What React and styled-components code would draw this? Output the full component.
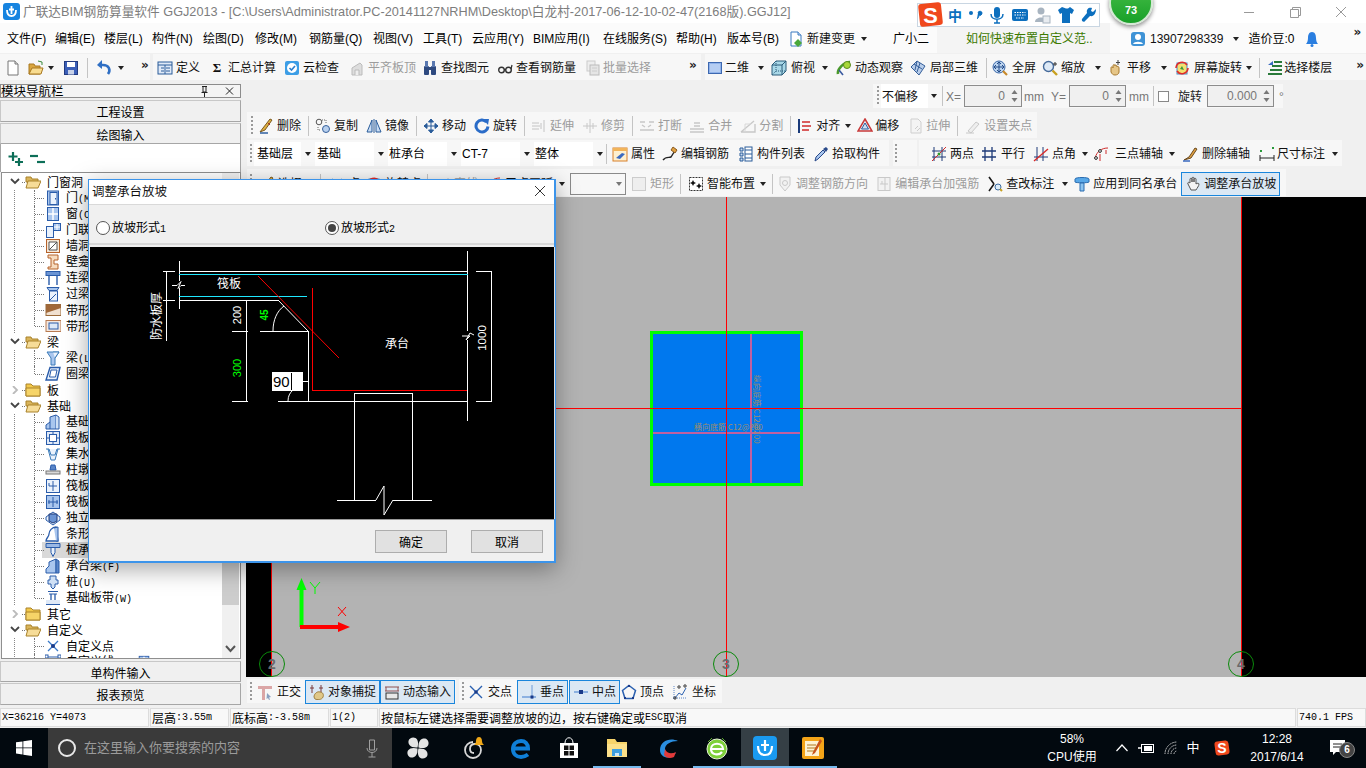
import React from "react";
import styled, { createGlobalStyle } from "styled-components";

const cjk = `"Noto Sans CJK SC", sans-serif`;
const ui = `"Liberation Sans", "Noto Sans CJK SC", sans-serif`;

const Global = createGlobalStyle`
  html, body { margin: 0; padding: 0; background: #f0f0f0; overflow: hidden; }
  * { box-sizing: border-box; }
`;

/* ---------- icons ---------- */
const B = "#2a5caa", LB = "#a9c6ee", O = "#b5622a";
const ICONS = {
  newf: <><path d="M3 1h7l3 3v11H3z" fill="#fff" stroke="#777"/><path d="M10 1v3h3" fill="#ddd" stroke="#777"/></>,
  open: <><path d="M1 4h5l1 2h5v8H1z" fill="#d9a63e" stroke="#a87820"/><path d="M4 8h11l-2 6H1z" fill="#f8dc90" stroke="#a87820"/><path d="M10 1l4 1v3" fill="none" stroke="#3a8a3a"/></>,
  save: <><rect x="1.5" y="1.5" width="13" height="13" fill="#3b5fb8" stroke="#223a80"/><rect x="4" y="2" width="8" height="5" fill="#fff"/><rect x="5" y="10" width="6" height="4.5" fill="#c8d2e8"/></>,
  undo: <><path d="M12 14c3-4 1-9-5-9H5" stroke="#2f6fc4" strokeWidth="2.6" fill="none"/><path d="M6 0v9L1 5z" fill="#2f6fc4"/></>,
  def: <><rect x="1" y="2" width="14" height="12" fill="#dfe9f7" stroke="#2a5c9a"/><path d="M1 5h14M4 8h3M4 11h3M9 8h4M9 11h4M8 5v9" stroke="#2a5c9a" fill="none"/></>,
  cloud: <><rect x="1" y="1" width="14" height="14" rx="2" fill="#3d9ee6"/><circle cx="8" cy="8" r="5" fill="#fff"/><path d="M5.5 8l2 2 3.5-4" stroke="#2a7fd0" strokeWidth="1.6" fill="none"/></>,
  flat: <><path d="M3 15V8l8-5 2 2v10z" fill="#ddd" stroke="#bbb"/><path d="M6 15v-5h4v5" fill="#eee" stroke="#bbb"/></>,
  find: <><rect x="2" y="6" width="5" height="9" rx="1" fill="#2f4a80"/><rect x="9" y="6" width="5" height="9" rx="1" fill="#2f4a80"/><rect x="3" y="1" width="3" height="6" fill="#5a78b0"/><rect x="10" y="1" width="3" height="6" fill="#5a78b0"/><rect x="7" y="7" width="2" height="3" fill="#2f4a80"/></>,
  glass: <><circle cx="4.5" cy="10" r="2.8" fill="none" stroke="#333" strokeWidth="1.4"/><circle cx="11.5" cy="10" r="2.8" fill="none" stroke="#333" strokeWidth="1.4"/><path d="M7 9.5h2M14 9l1-4" stroke="#333" strokeWidth="1.2"/></>,
  batch: <><rect x="3" y="1" width="8" height="10" fill="#eee" stroke="#ccc"/><rect x="6" y="5" width="9" height="10" fill="#e5e5e5" stroke="#bbb"/><path d="M8 8h5M8 11h5" stroke="#ccc"/></>,
  plane: <><rect x="1.5" y="2.5" width="13" height="11" fill="#8fb2ea" stroke="#3d68b0"/><rect x="3" y="4" width="10" height="8" fill="#b5cdf2"/></>,
  cube: <><path d="M1 5l4-4h10v10l-4 4H1z" fill="#a9d8e8" stroke="#2a5c7a"/><path d="M1 5h10v10M11 5l4-4" fill="none" stroke="#2a5c7a"/><path d="M5 1v10l-4 4M5 11h10" fill="none" stroke="#2a5c7a" strokeDasharray="1 1"/></>,
  orbit: <><path d="M2 14c-1-5 6-12 12-12" stroke="#4a9a2a" strokeWidth="2.6" fill="none"/><circle cx="11" cy="5" r="3.5" fill="#a8d838" stroke="#5a8a20"/><path d="M3 10l4 5" stroke="#3a5aa0" strokeWidth="1.6"/></>,
  part3d: <><path d="M1 7l6-6 8 5-6 9z" fill="#b8cdea" stroke="#355f9a"/><path d="M4 4l8 5M7 1l-2 9M10 3l-3 9" stroke="#355f9a" fill="none"/></>,
  full: <><circle cx="7" cy="7" r="6" fill="#bcd4ef" stroke="#3b68a8"/><path d="M7 2v10M2 7h10M7 2l-2 2M7 2l2 2M7 12l-2-2M7 12l2-2M2 7l2-2M2 7l2 2M12 7l-2-2M12 7l-2 2" stroke="#234b88" fill="none"/><path d="M11 11l4 4" stroke="#c88a2a" strokeWidth="2.2"/></>,
  zoom: <><circle cx="6.5" cy="6.5" r="5" fill="#dde9f6" stroke="#456a9a" strokeWidth="1.4"/><path d="M10.5 10.5l4.5 4.5" stroke="#c8a020" strokeWidth="2.4"/><path d="M13 2v4M11 4h4" stroke="#333"/></>,
  pan: <><path d="M4 8c0-2 2-1 2 0V6c0-2 2-2 2 0 0-2 2-1 2 1 0-1 2-1 2 1v4c0 2-2 3-4 3s-3-1-4-3z" fill="#e6c688" stroke="#a87a30"/><path d="M11 0v5M9 2.5h4" stroke="#444"/></>,
  rot: <><rect x="3" y="3" width="10" height="11" fill="#f4e070" stroke="#4a8ac8"/><path d="M2 8a6 6 0 0 1 11-3M14 8a6 6 0 0 1-11 3" stroke="#e02a2a" strokeWidth="1.6" fill="none"/><path d="M6 9l2-3 2 4z" fill="#3a9a3a"/></>,
  floor: <><path d="M7 2h8M5 6h10M3 10h12M1 14h14" stroke="#2a7a3a" strokeWidth="2" fill="none"/><path d="M6 1L1 5h5z" fill="#3a6ac0"/></>,
  change: <><path d="M3 1h7l3 3v11H3z" fill="#fff" stroke="#3a7ac0"/><path d="M10 1v3h3" fill="#cfe0f5" stroke="#3a7ac0"/><path d="M10 8l4 4-4 4-4-4z" fill="#4aa83a"/></>,
  user: <><rect x="1" y="1" width="14" height="14" rx="3" fill="#3f93d6"/><circle cx="8" cy="6" r="3" fill="#fff"/><path d="M3 13c1-3 9-3 10 0z" fill="#fff"/></>,
  bell: <><path d="M8 1c-3 0-4 3-4 6 0 3-1 5-2 6h12c-1-1-2-3-2-6 0-3-1-6-4-6z" fill="#2a7ee0"/><circle cx="8" cy="14.5" r="1.5" fill="#2a7ee0"/></>,
  del: <><path d="M2 14l5-2 7-10-2-1-7 9z" fill="#e0b040" stroke="#7a5a20"/><path d="M2 15h8" stroke="#3060a0" strokeWidth="1.5"/><path d="M10 5l2 2" stroke="#b02a2a"/></>,
  copy: <><circle cx="4" cy="4" r="2.8" fill="none" stroke="#555"/><circle cx="11" cy="11" r="3.5" fill="#b8d0ee" stroke="#355f9a"/><path d="M7 2h4v3M3 9v3h3" fill="none" stroke="#666" strokeDasharray="1 1"/></>,
  mirror: <><path d="M1 14L6 2v12zM15 14L10 2v12z" fill="#c8dcf4" stroke="#2a5c9a"/><path d="M8 1v14" stroke="#2a5c9a"/></>,
  move: <><path d="M8 1v14M1 8h14M8 1L5.5 4h5zM8 15l-2.5-3h5zM1 8l3-2.5v5zM15 8l-3-2.5v5z" fill="#2a5c9a" stroke="#2a5c9a"/></>,
  rotate: <><path d="M12.5 4A6 6 0 1 0 14 8.5" stroke="#2a6cc8" strokeWidth="3" fill="none"/><path d="M9 1l6 0-1 6z" fill="#2a6cc8"/></>,
  ext: <><path d="M1 8h8M13 2v12M10 5v6M1 5h7M1 11h7" stroke="#c4c4c4" fill="none"/></>,
  trim: <><path d="M1 8h14M8 1v14M5 5v6M11 5v6" stroke="#c8c8c8" fill="none"/></>,
  brk: <><path d="M1 4h5M10 4h5M1 12h14M3 7l3 2M12 7l-3 2" stroke="#c8c8c8" strokeWidth="1.4" fill="none"/></>,
  merge: <><path d="M1 11h14M1 14h14M5 5h6M5 8h6" stroke="#c8c8c8" strokeWidth="1.4" fill="none"/></>,
  split: <><path d="M1 14l13-11M1 14h14V6" stroke="#c8c8c8" strokeWidth="1.4" fill="none"/><path d="M5 14V6h6" stroke="#d8d8d8" fill="none"/></>,
  align: <><path d="M2 1v14" stroke="#1a3a7a" strokeWidth="2"/><path d="M5 4h8M5 8h9M5 12h7" stroke="#d02a2a" strokeWidth="1.5"/></>,
  offset: <><path d="M8 1l7 12H1z" fill="#e8eef6" stroke="#c83a3a" strokeWidth="1.5"/><path d="M8 5l3.5 6h-7z" fill="#cfe0f5" stroke="#2a5c9a"/></>,
  stretch: <><path d="M3 1h7l3 3v11H3z" fill="#f4f4f4" stroke="#cfcfcf"/><path d="M7 11l3-3M9 13l3-3" stroke="#ccc"/></>,
  grip: <><path d="M1 15h8M3 13l8-9 3 2-8 9z" fill="#eee" stroke="#c8c8c8"/></>,
  attr: <><rect x="1" y="2" width="14" height="13" fill="#fdf0d0" stroke="#d8802a"/><path d="M1 2h14v3H1z" fill="#f2b45a"/><path d="M4 12l6-5 3 1-5 5z" fill="#3a6ac0"/></>,
  editbar: <><path d="M1 14c3-4 6-2 8-3l5-8" stroke="#222" strokeWidth="1.4" fill="none"/><path d="M11 1l4 3-2 3-4-3z" fill="#e0a040" stroke="#8a5a20"/></>,
  list: <><path d="M2 2h3v3H2zM2 7h3v3H2zM2 12h3v3H2z" fill="#c8dcf4" stroke="#2a5c9a"/><rect x="7" y="1" width="7" height="14" fill="#fff" stroke="#2a5c9a"/><path d="M7 4h7M7 8h7M7 12h7" stroke="#2a5c9a"/></>,
  pick: <><path d="M2 15l1-4 7-7 2 2-7 7z" fill="#a9c6ee" stroke="#2a4a8a"/><path d="M10 3l3-2 2 2-2 3z" fill="#2a4a8a"/></>,
  twop: <><path d="M3 1v14M11 1v14M1 5h14M1 11h14" stroke="#1e3a78" fill="none"/><path d="M1 15L15 1" stroke="#d02a2a"/><circle cx="8" cy="8" r="1.5" fill="#2a9a2a"/></>,
  para: <><path d="M4 1v14M11 1v14M1 5h14M1 11h14" stroke="#1e3a78" strokeWidth="1.3" fill="none"/></>,
  angle: <><path d="M4 1v14M10 1v14M1 11h14" stroke="#1e3a78" fill="none"/><path d="M1 15L15 3" stroke="#d82a2a" strokeWidth="1.4"/></>,
  three: <><path d="M1 12C3 5 8 2 14 2" stroke="#d02a2a" fill="none"/><circle cx="2" cy="12" r="1.4" fill="#fff" stroke="#222"/><circle cx="6" cy="5" r="1.4" fill="#fff" stroke="#222"/><path d="M6 8v7M12 4v4" stroke="#d02a2a"/></>,
  delaxis: <><path d="M2 14l5-3 6-9 2 1-6 9z" fill="#e0a040" stroke="#6a4a20"/><path d="M1 15h7" stroke="#3a6ac0" strokeWidth="1.5"/></>,
  dim: <><path d="M1 9v6M15 9v6M1 12h14" stroke="#222" fill="none"/><rect x="1" y="4" width="2" height="2" fill="#2a9a3a"/><rect x="13" y="1" width="2" height="2" fill="#2a9a3a"/></>,
  rectc: <><rect x="1.5" y="1.5" width="13" height="13" fill="#eee" stroke="#ccc"/></>,
  smart: <><rect x="1.5" y="1.5" width="13" height="13" fill="#fff" stroke="#333" strokeDasharray="2 1"/><path d="M5 4l1 2 2 1-2 1-1 2-1-2-2-1 2-1zM11 7l1 2 2 1-2 1-1 2-1-2-2-1 2-1z" fill="#111"/></>,
  bardir: <><path d="M3 1h10v8l-5 6-5-6z" fill="#f2f2f2" stroke="#c9c9c9"/><circle cx="8" cy="7" r="2.5" fill="none" stroke="#c9c9c9"/></>,
  strong: <><rect x="2" y="1.5" width="12" height="13" fill="#f2f2f2" stroke="#c9c9c9"/><path d="M9 2v12M4 8h8M6 5v3" stroke="#c9c9c9"/></>,
  note: <><path d="M2 1l5 7M2 15l5-7" stroke="#1a1a1a" strokeWidth="1.6"/><circle cx="11" cy="11" r="3" fill="#dcecf8" stroke="#3a6aa0"/><path d="M13 13l2 2" stroke="#c8a020" strokeWidth="2"/></>,
  apply: <><path d="M1 3c0-2 14-2 14 0v3c0 1-14 1-14 0z" fill="#58a8e8" stroke="#2a6cb0"/><path d="M6 7h4v8H6z" fill="#8cc4f0" stroke="#2a6cb0"/></>,
  hand: <><path d="M3 8c-1-2 1-2 2-1V3c0-1 2-1 2 0v3-4c0-1 2-1 2 0v4-3c0-1 2-1 2 0v5c1-1 3-1 3 0 0 2-2 4-3 6H6z" fill="#f4f4f4" stroke="#555"/></>,
  ortho: <><path d="M1 2h14v3H8v11H5V5H1z" fill="#dba6a6"/><path d="M10 9l4 4-2 .5 1 2-1 .5-1-2-1.5 1z" fill="#8aa0c0"/></>,
  snap: <><path d="M3 1v8M12 1v8M1 4h4M10 4h4" stroke="#7a3a3a"/><path d="M5 13c0-3 3-6 6-5 3 0 4 3 3 5-1 3-6 3-8 2z" fill="#e0c888" stroke="#a08040"/></>,
  dynin: <><path d="M1 3h14M1 7h14M2 3v4M14 3v4" stroke="#905050"/><rect x="2" y="9" width="12" height="6" fill="#e8e8e8" stroke="#333"/></>,
  cross: <><path d="M2 2l12 12M14 2L2 14" stroke="#2a60b0" strokeWidth="1.4"/><circle cx="8" cy="8" r="1.8" fill="#1a3a88"/></>,
  perp: <><path d="M1 13h14" stroke="#6a9ad8" strokeWidth="1.4"/><path d="M11 1v14" stroke="#6a9ad8"/><rect x="9.5" y="11.5" width="3" height="3" fill="#1a3a88"/></>,
  mid: <><path d="M1 8h14" stroke="#6a9ad8" strokeWidth="1.4"/><rect x="6" y="6" width="4" height="4" fill="#1a3a88"/></>,
  vert: <><path d="M8 1.5l6.5 5-2.5 8H4l-2.5-8z" fill="none" stroke="#2a60b0" strokeWidth="1.5"/><rect x="7" y="1" width="2" height="2" fill="#1a3a88"/><rect x="3" y="13" width="2" height="2" fill="#1a3a88"/><rect x="11" y="13" width="2" height="2" fill="#1a3a88"/></>,
  coord: <><path d="M3 14l4-5 3 2 4-7" stroke="#2a60b0" fill="none"/><path d="M2 2v13M1 14h14" stroke="#5a86c8" strokeDasharray="1 1"/><circle cx="7" cy="3" r="1.2" fill="none" stroke="#333"/><circle cx="13" cy="2" r="1.2" fill="none" stroke="#333"/><circle cx="3" cy="14" r="1.2" fill="none" stroke="#333"/></>,
  plus: <><path d="M6 1v9M1.5 5.5h9" stroke="#0d6f58" strokeWidth="2.2"/><path d="M12 7v8M8 11h8" stroke="#0d6f58" strokeWidth="2.2"/></>,
  minus: <><path d="M1 5h8" stroke="#0d6f58" strokeWidth="2.2"/><path d="M8 11h8" stroke="#0d6f58" strokeWidth="2.2"/></>,
  fo: <><path d="M1 3h5l1 2h6v3H1z" fill="#d9b45a" stroke="#a9822a"/><path d="M3 7h13l-3 7H1z" fill="#f6dc98" stroke="#a9822a"/></>,
  fc: <><path d="M1 2h5l2 2h7v10H1z" fill="#f2c84a" stroke="#a9822a"/><path d="M1 6h14v8H1z" fill="#f6d468" stroke="#a9822a"/></>,
  door: <><rect x="2.5" y="1" width="11" height="14" fill={LB} stroke={B}/><rect x="5" y="2.5" width="7" height="12" fill="#eaf2fc" stroke={B}/><rect x="10" y="8" width="1" height="1.5" fill={B}/></>,
  win: <><rect x="2.5" y="1.5" width="11" height="13" fill={LB} stroke={B}/><path d="M8 2v12M3 8h10" stroke="#fff" strokeWidth="1.5"/></>,
  dw: <><rect x="1.5" y="4.5" width="7" height="11" fill="#eaf2fc" stroke={B}/><rect x="8.5" y="1.5" width="7" height="7" fill={LB} stroke={B}/><path d="M12 2v6M9 5h6" stroke="#fff"/></>,
  hole: <><rect x="1.5" y="1.5" width="13" height="13" fill="#f6e8d8" stroke={O}/><path d="M4 4h8v8H4zM4 12l8-8" fill="#fff" stroke="#555"/></>,
  niche: <><path d="M3 1h10v5H9v4h4v5H3v-2h3V4H3z" fill="#f6dcc0" stroke={O}/></>,
  beamc: <><rect x="1" y="1.5" width="14" height="4" fill="#6a94d4" stroke={B}/><path d="M4 5v10M12 5v10" stroke={B} strokeWidth="1.4"/></>,
  lint: <><path d="M2 1.5h12l-2 3H4z" fill={LB} stroke={B}/><rect x="4.5" y="5" width="8" height="10" fill="#eaf2fc" stroke={B}/><path d="M5 14l6-6" stroke={B}/></>,
  strip1: <><rect x="1" y="2.5" width="15" height="11" fill="#f0e0d0" stroke="#9a6a3a"/><path d="M1 11l15-5v-3H1z" fill="#a0683a"/></>,
  strip2: <><rect x="1" y="2.5" width="15" height="11" fill="#f4e8e0" stroke="#b87a50"/><rect x="4" y="5" width="9" height="6" fill="#dce8f8" stroke={B}/></>,
  beam: <><path d="M2 2h12l-4 6v7H6V8z" fill={LB} stroke="#3a7ab8"/><path d="M8 2l6 0-4 6" fill="#eaf2fc" stroke="#3a7ab8"/></>,
  ring: <><path d="M5 1.5h10L12 14H1z" fill="#eaf2fc" stroke={B} strokeWidth="1.4"/><path d="M6 4h6l-1.5 7H4.5z" fill="#fff" stroke={B}/></>,
  fbase: <><path d="M1 15v-4l4-3V3l6-2v14z" fill={LB} stroke={B}/><path d="M5 8v7M11 1l3 2v12h-3" fill="#cfe0f5" stroke={B}/></>,
  raft: <><rect x="1.5" y="1.5" width="13" height="13" fill="#dfe9f7" stroke={B}/><rect x="4.5" y="4.5" width="7" height="7" fill="#fff" stroke={B}/><path d="M1 8h3M12 8h3M8 1v3M8 12v3" stroke={B}/></>,
  pit: <><path d="M1 3h3l2 6h4l2-6h3M3 3l3 11h4l3-11" fill="#eaf2fc" stroke="#3a7ab8"/></>,
  cap: <><path d="M6 3h4l1 5H5z" fill="#5a86c8" stroke={B}/><rect x="1" y="9" width="14" height="3" fill="#d8d8d8" stroke="#777"/></>,
  rmain: <><rect x="1.5" y="1.5" width="13" height="13" fill="#eaf2fc" stroke={B}/><path d="M8 3v10M4 8h8M4 5v3" stroke={B}/></>,
  rneg: <><rect x="1.5" y="1.5" width="13" height="13" fill={LB} stroke={B}/><path d="M8 3v10M3 8h10M4 6v4M12 6v4" stroke={B}/></>,
  iso: <><path d="M1 7l7 -5 7 5v3l-7 5-7-5z" fill="#eaf2fc" stroke={B}/><path d="M4 4h8v7l-4 2-4-2z" fill="#6a94d4" stroke="#1e3a78"/></>,
  ftg: <><path d="M1 15c0-3 3-4 3-7s3-7 7-7l2 14z" fill="#fff" stroke={B} strokeWidth="1.3"/><path d="M9 2l4-1v14h-2" fill={LB} stroke={B}/></>,
  pilecap: <><path d="M1 1.5h14v4H1z" fill="#9ab8e4" stroke={B}/><path d="M6 5.5h4v5l-2 4-2-4z" fill="#eaf2fc" stroke={B}/></>,
  cbeam: <><path d="M1 15v-4l3-3V4l7-3v14z" fill={LB} stroke={B}/><path d="M11 1l3 2v12h-3z" fill="#5a86c8" stroke={B}/></>,
  pile: <><path d="M5 2h6v4h2v4h-3v3l-2 2-2-2v-3H3V6h2z" fill="#cfe0f5" stroke={B}/></>,
  band: <><path d="M3 1.5h10M4 4h8M1 14.5h14" stroke={B}/><path d="M6 4v10M10 4v10" stroke={B} strokeWidth="1.3"/><rect x="1" y="10" width="14" height="4" fill="#dfe9f7"/></>,
  point: <><path d="M3 3l10 10M13 3L3 13" stroke="#3a7ac8" strokeWidth="1.3"/><circle cx="8" cy="8" r="2" fill="#1a3a88"/></>,
  cline: <><path d="M1 3h14" stroke={B}/><rect x="0" y="1" width="3" height="3" fill="#fff" stroke={B}/><rect x="13" y="1" width="3" height="3" fill="#fff" stroke={B}/></>,
};

const IconSvg = styled.svg`
  flex: none;
  width: ${p => p.$s || 16}px;
  height: ${p => p.$s || 16}px;
  display: block;
`;
const Ic = ({ n, s }) => <IconSvg $s={s} viewBox="0 0 16 16">{ICONS[n]}</IconSvg>;

/* ---------- shell ---------- */
const Shell = styled.div`
  position: relative;
  width: 1366px;
  height: 768px;
  overflow: hidden;
  background: #f0f0f0;
  display: flex;
  flex-direction: column;
  font: 12px/16px ${ui};
  color: #000;
`;
const Title = styled.div`
  height: 23px;
  flex: none;
  background: #fff;
  display: flex;
  align-items: center;
  padding-left: 3px;
  gap: 3px;
`;
const AppLogo = styled.svg`
  width: 17px;
  height: 17px;
  flex: none;
`;
const TitleText = styled.span`
  font-size: 12.7px;
  color: #7d7d7d;
  white-space: nowrap;
  flex: 1;
`;
const WinBtns = styled.div`
  display: flex;
  padding-right: 2px;
`;
const WinBtn = styled.svg`
  width: 46px;
  height: 20px;
`;
const Menu = styled.div`
  height: 30px;
  flex: none;
  background: #fbfbfb;
  display: flex;
  align-items: center;
  padding: 2px 0 0 7px;
  white-space: nowrap;
`;
const MenuItem = styled.span`
  flex: none;
  width: ${p => p.$w}px;
  margin-left: ${p => p.$ml || 0}px;
`;
const Caret = styled.i`
  flex: none;
  width: 0;
  height: 0;
  margin-left: ${p => p.$ml ?? 6}px;
  border: 3px solid transparent;
  border-top: 4px solid ${p => p.$c || "#222"};
  border-bottom: 0;
`;
const Hint = styled.div`
  flex: none;
  width: 173px;
  height: 30px;
  margin: -2px 0 0 8px;
  padding: 2px 0 0 29px;
  background: #f4f4f4;
  color: #3d7a00;
  display: flex;
  align-items: center;
`;
const Chev = styled.span`
  font: bold 12px/12px "DejaVu Sans", sans-serif;
  letter-spacing: -1px;
  color: #222;
  margin-left: ${p => p.$ml || 0}px;
  margin-right: ${p => p.$mr || 0}px;
  align-self: flex-start;
  margin-top: ${p => p.$mt ?? 4}px;
`;
const ChevEnd = styled(Chev)`
  margin-left: auto;
  margin-right: 3px;
`;
const TopBar = styled.div`
  height: 28px;
  flex: none;
  display: flex;
  align-items: center;
`;
const Strip = styled.div`
  height: ${p => p.$h || 26}px;
  flex: none;
  width: ${p => (p.$w ? p.$w + "px" : "auto")};
  margin-left: ${p => p.$ml || 0}px;
  padding: 2px 0 0 ${p => p.$pl ?? 2}px;
  background: #f7f7f7;
  display: flex;
  align-items: center;
  gap: ${p => p.$gap ?? 7}px;
  white-space: nowrap;
`;
const ToolBox = styled.div`
  display: flex;
  align-items: center;
  flex: none;
  gap: ${p => p.$gap ?? 3}px;
  margin-left: ${p => p.$ml || 0}px;
  height: ${p => (p.$on ? "24px" : "auto")};
  padding: ${p => (p.$on ? "0 4px" : "0")};
  color: ${p => (p.$off ? "#9c9c9c" : "#111")};
  background: ${p => (p.$on ? "#dbe8f4" : "transparent")};
  outline: ${p => (p.$on ? "1.5px solid #1a86dc" : "none")};
  outline-offset: -1.5px;
`;
const T = ({ i, off, on, ml, gap, caret, cm, children }) => (
  <ToolBox $off={off} $on={on} $ml={ml} $gap={gap}>
    {i && <Ic n={i} />}
    {children && <span>{children}</span>}
    {caret && <Caret $ml={cm} />}
  </ToolBox>
);
const Sep = styled.span`
  flex: none;
  width: 1px;
  height: 20px;
  background: #c4c4c4;
  margin-left: ${p => p.$ml || 0}px;
`;
const Grip = styled.span`
  flex: none;
  width: 2px;
  height: 20px;
  margin-left: ${p => p.$ml || 0}px;
  background: repeating-linear-gradient(#9a9a9a 0 2px, transparent 2px 4px);
`;
const SigmaText = styled.b`
  font: bold 13px/16px "Liberation Serif", serif;
  width: 16px;
  text-align: center;
`;
const Combo = styled.div`
  flex: none;
  display: flex;
  align-items: center;
  height: ${p => p.$h || 24}px;
  width: ${p => p.$w}px;
  margin-left: ${p => p.$ml || 0}px;
  background: #fff;
  padding-left: ${p => p.$pl ?? 1}px;
`;
const BoxCombo = styled.div`
  flex: none;
  width: 56px;
  height: 22px;
  margin-left: 5px;
  border: 1px solid #8a8a8a;
  background: #f7f7f7;
  display: flex;
  align-items: center;
  justify-content: flex-end;
  padding-right: 3px;
`;
const ComboArrow = styled.span`
  flex: none;
  display: flex;
  align-items: center;
  justify-content: center;
  width: 13px;
  height: 24px;
  background: #f7f7f7;
`;

/* ---------- left panel ---------- */
const Body = styled.div`
  flex: 1;
  min-height: 0;
  display: flex;
`;
const Left = styled.aside`
  width: 246px;
  flex: none;
  padding-top: 3px;
  display: flex;
  flex-direction: column;
`;
const PanelHead = styled.div`
  width: 241px;
  height: 14px;
  border: 1px solid #8c8c8c;
  display: flex;
  align-items: center;
  font: 12px/12px ${cjk};
  overflow: hidden;
  background: #f4f4f4;
  margin-bottom: 2px;
`;
const PanelHeadText = styled.span`
  flex: 1;
  font-size: 12.5px;
`;
const PanelBtn = styled.div`
  width: 241px;
  height: ${p => p.$h || 22}px;
  flex: none;
  background: #f0f0f0;
  border: 1px solid #a6a6a6;
  border-top-color: #c8c8c8;
  border-left-color: #c8c8c8;
  margin-top: ${p => p.$mt || 0}px;
  padding-top: 2px;
  display: flex;
  align-items: center;
  justify-content: center;
  font: 12px/16px ${cjk};
`;
const TreeHead = styled.div`
  width: 241px;
  height: 28px;
  flex: none;
  background: #fff;
  border-left: 1px solid #a6a6a6;
  border-right: 1px solid #a6a6a6;
  display: flex;
  align-items: center;
  padding: 2px 0 0 6px;
  gap: 6px;
`;
const TreeBox = styled.div`
  width: 240px;
  height: 487px;
  flex: none;
  margin-left: 1px;
  border: 1px solid #8f8f8f;
  background: #fff;
  display: flex;
  overflow: hidden;
`;
const TreeList = styled.div`
  flex: 1;
  min-width: 0;
  padding-top: 1px;
  overflow: hidden;
`;
const Lat = styled.span`
  font: 10px/16px "Liberation Mono", monospace;
`;
const Row = styled.div`
  position: relative;
  height: 16px;
  display: flex;
  align-items: center;
  padding-left: ${p => (p.$lv ? 43 : 23)}px;
  gap: ${p => (p.$lv ? 5 : 6)}px;
  font: 12px/16px ${cjk};
  white-space: nowrap;
  background: ${p => (p.$lv ? `linear-gradient(#888 50%, transparent 50%) 12px 0 / 1px 2px repeat-y` : "none")};
  &::before {
    content: "";
    position: absolute;
    left: ${p => (p.$lv ? 32 : 20)}px;
    top: ${p => (p.$lv ? 0 : 8)}px;
    height: ${p => (p.$lv ? (p.$last ? 8 : 16) : 0)}px;
    border-left: ${p => (p.$lv ? "1px dotted #777" : "none")};
  }
  &::after {
    content: "";
    position: absolute;
    left: ${p => (p.$lv ? 33 : 20)}px;
    top: 8px;
    width: ${p => (p.$lv ? 9 : 3)}px;
    border-top: 1px dotted #777;
  }
`;
const Sel = styled.span`
  display: flex;
  align-items: center;
  gap: 5px;
  margin-left: -3px;
  padding-left: 3px;
  height: 16px;
  width: 60px;
  flex: none;
  background: #d9d9d9;
`;
const Exp = styled.svg`
  position: absolute;
  left: 8px;
  top: 4px;
  width: 10px;
  height: 8px;
`;
const NewTag = styled.span`
  font: bold 11px/16px "Liberation Sans", sans-serif;
  color: #f5c400;
  margin-left: -2px;
`;
const ScrollBar = styled.div`
  width: 17px;
  margin-right: 1px;
  flex: none;
  background: #f0f0f0;
  display: flex;
  flex-direction: column;
`;
const Thumb = styled.div`
  height: 416px;
  margin-top: 16px;
  background: #cdcdcd;
`;
const ScrollArrow = styled.svg`
  display: block;
  width: 17px;
  height: 14px;
  margin-top: auto;
  margin-bottom: 2px;
`;

/* ---------- right column ---------- */
const Right = styled.main`
  flex: 1;
  min-width: 0;
  display: flex;
  flex-direction: column;
`;
const OptionStrip = styled.div`
  height: 24px;
  width: 410px;
  margin: 3px 0 0 627px;
  flex: none;
  background: #f7f7f7;
  display: flex;
  align-items: center;
  padding-left: 4px;
  white-space: nowrap;
  color: #777;
`;
const Field = styled.div`
  flex: none;
  width: ${p => p.$w}px;
  height: 22px;
  margin-left: ${p => p.$ml || 0}px;
  border: 1px solid #8c8c8c;
  background: #f0f0f0;
  display: flex;
  align-items: center;
  justify-content: flex-end;
  font: 12px/16px "Liberation Sans", sans-serif;
  color: #777;
`;
const Spin = styled.svg`
  width: 13px;
  height: 18px;
  margin-left: 3px;
  flex: none;
`;
const Check = styled.span`
  flex: none;
  width: 11px;
  height: 11px;
  border: 1px solid #888;
  background: #fff;
  margin-left: ${p => p.$ml || 0}px;
`;
const Lbl = styled.span`
  margin-left: ${p => p.$ml || 0}px;
  padding-top: 1px;
  color: ${p => p.$c || "#777"};
`;
const ToolRow = styled.div`
  flex: none;
  display: flex;
  margin-top: ${p => p.$mt || 0}px;
`;
const Canvas = styled.svg`
  display: block;
  width: 1120px;
  height: 480px;
  margin-top: ${p => p.$mt || 0}px;
  flex: none;
`;
const SnapBar = styled.div`
  height: 31px;
  flex: none;
  display: flex;
  padding-top: 2px;
  align-items: flex-start;
`;

/* ---------- status ---------- */
const Status = styled.footer`
  height: 20px;
  flex: none;
  display: flex;
  gap: 1px;
  padding-bottom: 1px;
`;
const Cell = styled.div`
  flex: ${p => (p.$w ? "none" : 1)};
  width: ${p => (p.$w ? p.$w + "px" : "auto")};
  background: #f8f8f8;
  border: 1px solid #dcdcdc;
  display: flex;
  align-items: center;
  padding-left: 1px;
  font: 12px/16px ${cjk};
  white-space: nowrap;
  overflow: hidden;
`;

/* ---------- taskbar ---------- */
const Taskbar = styled.nav`
  height: 40px;
  flex: none;
  background: #02090f;
  display: flex;
  align-items: stretch;
  color: #fff;
  font: 12px/16px ${ui};
`;
const Start = styled.div`
  width: 48px;
  flex: none;
  display: flex;
  align-items: center;
  justify-content: center;
`;
const Search = styled.div`
  width: 344px;
  flex: none;
  background: #3a3a3a;
  display: flex;
  align-items: center;
  padding-left: 9px;
  gap: 7px;
  color: #9b9b9b;
  font-size: 13px;
`;
const SearchText = styled.span`
  flex: 1;
`;
const Slot = styled.div`
  width: 48px;
  flex: none;
  margin-left: ${p => p.$ml || 0}px;
  display: flex;
  align-items: center;
  justify-content: center;
  padding-bottom: 1px;
  background: ${p => (p.$on ? "#353f45" : "transparent")};
  box-shadow: ${p => (p.$run ? "inset 0 -2px 0 #76b9ed" : "none")};
`;
const TaskSvg = styled.svg`
  width: ${p => p.$s || 24}px;
  height: ${p => p.$s || 24}px;
  margin-right: ${p => p.$mr || 0}px;
  display: block;
  flex: none;
`;
const Tray = styled.div`
  margin-left: auto;
  display: flex;
  align-items: center;
`;
const TrayStack = styled.div`
  width: ${p => p.$w}px;
  margin-right: ${p => p.$mr || 0}px;
  margin-left: ${p => p.$ml || 0}px;
  flex: none;
  text-align: center;
  line-height: 18px;
`;
const TraySlot = styled.div`
  width: ${p => p.$w}px;
  flex: none;
  display: flex;
  justify-content: center;
  font-size: 13px;
  margin-left: ${p => p.$ml || 0}px;
`;
const Notify = styled.div`
  position: relative;
  width: 56px;
  flex: none;
  display: flex;
  justify-content: center;
`;
const NotifyBadge = styled.span`
  position: absolute;
  left: 29px;
  top: 4px;
  width: 16px;
  height: 16px;
  border-radius: 50%;
  background: #444;
  border: 1px solid #888;
  color: #fff;
  font: bold 10px/14px "Liberation Sans", sans-serif;
  text-align: center;
`;

/* ---------- overlays ---------- */
const Sogou = styled.div`
  position: absolute;
  left: 917px;
  top: 3px;
  width: 183px;
  height: 24px;
  padding-left: 30px;
  background: #fff;
  border: 1px solid #c9d6e2;
  display: flex;
  align-items: center;
  gap: 5px;
`;
const SogouLogo = styled.svg`
  position: absolute;
  left: -1px;
  top: -3px;
  width: 27px;
  height: 27px;
`;
const SogouZh = styled.b`
  font: bold 14px/16px ${cjk};
  color: #0c6fbe;
`;
const Badge = styled.div`
  position: absolute;
  left: 1109px;
  top: -19px;
  width: 44px;
  height: 44px;
  border-radius: 50%;
  background: linear-gradient(#4ac04a, #18a028);
  border: 2px solid #d4e8d4;
  box-shadow: 0 2px 4px rgba(0, 0, 0, .45);
  color: #fff;
  font: bold 11px/14px "Liberation Sans", sans-serif;
  display: flex;
  align-items: flex-end;
  justify-content: center;
  padding-bottom: 6px;
`;
const Dialog = styled.section`
  position: absolute;
  left: 88px;
  top: 179px;
  width: 468px;
  height: 384px;
  background: #f0f0f0;
  border: 1px solid #3c94ea;
  border-bottom-width: 2px;
  border-right-width: 2px;
  box-shadow: 0 6px 22px rgba(0, 0, 0, .35);
  display: flex;
  flex-direction: column;
`;
const DlgTitle = styled.header`
  height: 25px;
  flex: none;
  background: #fff;
  border-bottom: 1px solid #d9d9d9;
  display: flex;
  align-items: center;
  justify-content: space-between;
  padding: 0 8px 2px 3px;
  font: 12.5px/16px ${cjk};
  color: #111;
`;
const DlgClose = styled.svg`
  width: 12px;
  height: 12px;
`;
const DlgOptions = styled.div`
  height: 40px;
  flex: none;
  border-bottom: 2px solid #d8d8d8;
  display: flex;
  align-items: center;
  padding: 8px 0 0 7px;
  font: 12px/16px ${cjk};
`;
const RadioItem = styled.label`
  display: flex;
  align-items: center;
  gap: 2px;
  width: 229px;
`;
const RadioDot = styled.span`
  width: 14px;
  height: 14px;
  flex: none;
  border-radius: 50%;
  border: 1px solid #555;
  background: #fff;
  display: flex;
  align-items: center;
  justify-content: center;
  &::after {
    content: "";
    width: 8px;
    height: 8px;
    border-radius: 50%;
    background: ${p => (p.$on ? "#444" : "transparent")};
  }
`;
const CadSvg = styled.svg`
  display: block;
  flex: none;
  width: 464px;
  height: 272px;
  margin: 2px 0 0 1px;
  background: #000;
  box-shadow: 0 1px 0 #999, 1px 0 0 #ddd;
`;
const DlgFoot = styled.div`
  flex: 1;
  display: flex;
  justify-content: flex-end;
  align-items: flex-start;
  padding: 11px 11px 0 0;
  gap: 24px;
`;
const DlgBtn = styled.button`
  width: 72px;
  height: 23px;
  background: #e1e1e1;
  border: 1px solid #adadad;
  font: 12px/16px ${cjk};
  color: #000;
  padding: 0;
`;

/* ---------- data ---------- */
const menus = [
  ["文件(F)", 48], ["编辑(E)", 49], ["楼层(L)", 48], ["构件(N)", 51], ["绘图(D)", 52], ["修改(M)", 54], ["钢筋量(Q)", 64],
  ["视图(V)", 50], ["工具(T)", 49], ["云应用(Y)", 61], ["BIM应用(I)", 70], ["在线服务(S)", 73], ["帮助(H)", 51], ["版本号(B)", 52],
];

const tree = [
  ["fo", "门窗洞", 0, 1],
  ["door", "门", 1, 0, "(M)"], ["win", "窗", 1, 0, "(C)"], ["dw", "门联窗", 1, 0, "(A)"], ["hole", "墙洞", 1, 0, "(D)"],
  ["niche", "壁龛", 1, 0, "(I)"], ["beamc", "连梁", 1, 0, "(G)"], ["lint", "过梁", 1, 0, "(G)"], ["strip1", "带形窗", 1], ["strip2", "带形洞", 1, "L"],
  ["fo", "梁", 0, 1],
  ["beam", "梁", 1, 0, "(L)"], ["ring", "圈梁", 1, "L", "(E)"],
  ["fc", "板", 0, 2],
  ["fo", "基础", 0, 1],
  ["fbase", "基础梁", 1, 0, "(F)"], ["raft", "筏板基础", 1, 0, "(M)"], ["pit", "集水坑", 1, 0, "(K)"], ["cap", "柱墩", 1, 0, "(Y)"],
  ["rmain", "筏板主筋", 1, 0, "(R)"], ["rneg", "筏板负筋", 1, 0, "(X)"], ["iso", "独立基础", 1, 0, "(D)"], ["ftg", "条形基础", 1, 0, "(T)"],
  ["pilecap", "桩承台", 1, "S", "(V)"], ["cbeam", "承台梁", 1, 0, "(F)"], ["pile", "桩", 1, 0, "(U)"], ["band", "基础板带", 1, "L", "(W)"],
  ["fc", "其它", 0, 2],
  ["fo", "自定义", 0, 1],
  ["point", "自定义点", 1], ["cline", "自定义线", 1, "N", "(X)"],
];

const RowItem = ({ d }) => {
  const [ic, label, lv, flag, lat] = d;
  const text = <span>{label}{lat && <Lat>{lat}</Lat>}</span>;
  return (
    <Row $lv={lv} $last={flag === "L"}>
      {!lv && flag === 1 && <Exp viewBox="0 0 10 8"><path d="M1 1l4 4 4-4" fill="none" stroke="#444" strokeWidth="1.8"/></Exp>}
      {!lv && flag === 2 && <Exp viewBox="0 0 10 8"><path d="M3 0l4 4-4 4" fill="none" stroke="#bbb" strokeWidth="1.8"/></Exp>}
      {flag === "S" ? <Sel><Ic n={ic} />{text}</Sel> : <><Ic n={ic} />{text}</>}
      {flag === "N" && <><Ic n="win" s={14} /><NewTag>NEW</NewTag></>}
    </Row>
  );
};

/* ---------- CAD drawing inside the dialog ---------- */
const W = "#fff";
const CadDrawing = () => (
  <CadSvg viewBox="90 247 464 272" shapeRendering="crispEdges">
    <g stroke={W} fill="none">
      <path d="M179 271.5H467.5M179 300.5H278.5" />
      <path d="M179.5 261V281M179.5 288V309" />
      <path d="M166.5 271V341M163 271.5H175M163 300.5H175" />
      <path d="M278 300L308 331" shapeRendering="auto"/>
      <path d="M308.5 331V401M260 331.5H308M278 401.5H467M232 331.5H248M232 401.5H248M246.5 300.5V401" />
      <path d="M467.5 251V331M467.5 340V421M476 271.5H492M476 401.5H492M491.5 271V401" />
      <path d="M354.5 393V500M412.5 393V500M354 393.5H412.5M337 500.5H376M393 500.5H432" />
      <path d="M376 500L384 486V515L393 500M172 285.5L177 285.5L181 281.5L178 288.5L181 285.5H185M462 336L470 336L466 340L470 333L474 335" shapeRendering="auto"/>
      <path d="M273 331C273 320 277 311 284 306M288 401C288 396 290 393 292 391" shapeRendering="auto"/>
      <path d="M303 381.5H308" />
    </g>
    <path d="M179 274.5H467.5M179 296.5H307" stroke="#1fe8ff" />
    <path d="M258 276L339 358" stroke="#f00" fill="none" shapeRendering="auto"/>
    <path d="M312.5 288V390.5H467" stroke="#f00" fill="none"/>
    <text x="217" y="288" fill={W} fontFamily={cjk} fontSize="12">筏板</text>
    <text x="385" y="348" fill={W} fontFamily={cjk} fontSize="12">承台</text>
    <text transform="translate(161 316) rotate(-90)" textAnchor="middle" fill={W} fontFamily={cjk} fontSize="12">防水板厚</text>
    <text transform="translate(486 338) rotate(-90)" textAnchor="middle" fill={W} fontFamily="Liberation Sans" fontSize="11.5">1000</text>
    <text transform="translate(241 315) rotate(-90)" textAnchor="middle" fill={W} fontFamily="Liberation Sans" fontSize="11">200</text>
    <text transform="translate(241 368) rotate(-90)" textAnchor="middle" fill="#0f0" fontFamily="Liberation Sans" fontSize="11">300</text>
    <text transform="translate(268 315) rotate(-90)" textAnchor="middle" fill="#0f0" fontFamily="Liberation Sans" fontSize="10" fontWeight="bold">45</text>
    <rect x="272" y="372" width="31" height="19" fill="#fff" />
    <text x="273" y="387" fill="#000" fontFamily="Liberation Sans" fontSize="15">90</text>
    <path d="M291.5 373V390" stroke="#000" />
  </CadSvg>
);

/* ---------- main canvas drawing ---------- */
const AxisMark = ({ x, n }) => (
  <g>
    <circle cx={x} cy="664" r="12.5" fill="none" stroke="#0a8a0a" />
    <text x={x} y="669" textAnchor="middle" fontFamily="Liberation Sans" fontSize="14" fontWeight="bold" fill="#6a6a6a">{n}</text>
  </g>
);
const MainCanvas = () => (
  <Canvas $mt={1} viewBox="246 197 1120 480">
    <rect x="246" y="197" width="1120" height="480" fill="#000" />
    <rect x="272" y="197" width="969" height="480" fill="#b3b3b3" />
    <rect x="651.5" y="332.5" width="150" height="152" fill="#0078ee" stroke="#00ff00" strokeWidth="3" />
    <path d="M751 334V483M653 433H800" stroke="#c060a0" strokeWidth="2" fill="none"/>
    <path d="M271.5 197V677M726.5 197V677M1241.5 197V677M246 408.5H1241" stroke="#f00" fill="none" shapeRendering="crispEdges"/>
    <text x="694" y="430" fontFamily={cjk} fontSize="8" fill="#9d8d6c">横向底筋 C12@200</text>
    <text transform="translate(754 375) rotate(90)" fontFamily={cjk} fontSize="8" fill="#9d8d6c">纵向底筋 C12@200</text>
    <AxisMark x={272} n="2" />
    <AxisMark x={726} n="3" />
    <AxisMark x={1241} n="4" />
    <path d="M301.5 627V586" stroke="#0f0" strokeWidth="4" />
    <path d="M301.5 578L296.5 590H306.5z" fill="#0f0" />
    <path d="M300 627H340" stroke="#f00" strokeWidth="4" />
    <path d="M350 627L338 622V632z" fill="#f00" />
    <path d="M310 582L315 588L320 582M315 588V594" stroke="#0f0" fill="none" />
    <path d="M338 607L346 616M346 607L338 616" stroke="#f00" fill="none" />
  </Canvas>
);

const SpinArrows = () => (
  <Spin viewBox="0 0 13 18"><path d="M6.5 3L3.5 7H9.5zM6.5 15L3.5 11H9.5z" fill="#777" /></Spin>
);

export default function App() {
  return (
    <Shell>
      <Global />
      <Title>
        <AppLogo viewBox="0 0 17 17">
          <rect x="0" y="0" width="17" height="17" rx="3" fill="#1784e0" />
          <path d="M8.5 3v8M4 7c0 4 1.5 6 4.5 6s4.5-2 4.5-6M6 6.5h5" stroke="#fff" strokeWidth="1.8" fill="none" />
        </AppLogo>
        <TitleText>广联达BIM钢筋算量软件 GGJ2013 - [C:\Users\Administrator.PC-20141127NRHM\Desktop\白龙村-2017-06-12-10-02-47(2168版).GGJ12]</TitleText>
        <WinBtns>
          <WinBtn viewBox="0 0 46 20"><path d="M18 10.5H28" stroke="#999" /></WinBtn>
          <WinBtn viewBox="0 0 46 20"><path d="M18.5 7.5h8v8h-8zM20.5 7.5v-2h8v8h-2" fill="none" stroke="#999" /></WinBtn>
          <WinBtn viewBox="0 0 46 20"><path d="M18 5l10 10M28 5L18 15" stroke="#999" /></WinBtn>
        </WinBtns>
      </Title>

      <Menu>
        {menus.map(([t, w]) => <MenuItem key={t} $w={w}>{t}</MenuItem>)}
        <T i="change" ml={9} caret cm={3}>新建变更</T>
        <MenuItem $w={36} $ml={26}>广小二</MenuItem>
        <Hint>如何快速布置自定义范..</Hint>
        <T i="user" ml={20} gap={4} caret cm={6}>13907298339</T>
        <MenuItem $w={46} $ml={9}>造价豆:0</MenuItem>
        <ToolBox $ml={10}><Ic n="bell" /></ToolBox>
        <Chev $ml={33} $mt={1}>»</Chev>
      </Menu>

      <TopBar>
        <Strip $w={150} $pl={5} $gap={5}>
          <Ic n="newf" />
          <T i="open" ml={2} caret cm={1} />
          <T i="save" ml={4} />
          <Sep $ml={3} />
          <T i="undo" ml={3} caret cm={3} />
          <Chev $ml={12} $mt={3}>»</Chev>
        </Strip>
        <Strip $w={548} $ml={3} $pl={4} $gap={8}>
          <T i="def">定义</T>
          <ToolBox $ml={1}><SigmaText>Σ</SigmaText><span>汇总计算</span></ToolBox>
          <T i="cloud" ml={0}>云检查</T>
          <T i="flat" ml={2} off>平齐板顶</T>
          <T i="find" ml={-2}>查找图元</T>
          <T i="glass" ml={0}>查看钢筋量</T>
          <T i="batch" ml={0} off>批量选择</T>
          <Chev $ml={30} $mt={3}>»</Chev>
        </Strip>
        <Strip $w={661} $ml={4} $pl={2} $gap={5}>
          <T i="plane" gap={2}>二维</T>
          <ComboArrow><Caret $ml={0} /></ComboArrow>
          <T i="cube" gap={4} ml={-1} caret cm={3}>俯视</T>
          <T i="orbit" ml={3} gap={3}>动态观察</T>
          <T i="part3d" gap={4} ml={2}>局部三维</T>
          <Sep $ml={3} />
          <T i="full" gap={4}>全屏</T>
          <T i="zoom" gap={3} ml={1} caret cm={7}>缩放</T>
          <T i="pan" gap={4} ml={1} caret cm={6}>平移</T>
          <T i="rot" gap={4} ml={2} caret cm={0}>屏幕旋转</T>
          <Sep $ml={2} />
          <T i="floor" gap={1} ml={2}>选择楼层</T>
          <ChevEnd $mt={3}>»</ChevEnd>
        </Strip>
      </TopBar>

      <Body>
        <Left>
          <PanelHead>
            <PanelHeadText>模块导航栏</PanelHeadText>
            <svg width="40" height="12" viewBox="0 0 40 12">
              <path d="M2 1.5h5M3 1.5V7H6V1.5M1.5 7.5H7.5M4.5 8V12" stroke="#222" fill="none" />
              <path d="M26 2.5l7 7M33 2.5l-7 7" stroke="#222" fill="none" />
            </svg>
          </PanelHead>
          <PanelBtn>工程设置</PanelBtn>
          <PanelBtn $mt={1} $h={21}>绘图输入</PanelBtn>
          <TreeHead>
            <Ic n="plus" /><Ic n="minus" />
          </TreeHead>
          <TreeBox>
            <TreeList>
              {tree.map((d, i) => <RowItem key={i} d={d} />)}
            </TreeList>
            <ScrollBar>
              <Thumb />
              <ScrollArrow viewBox="0 0 17 14"><path d="M4 4l4.5 5L13 4" fill="none" stroke="#555" strokeWidth="2" /></ScrollArrow>
            </ScrollBar>
          </TreeBox>
          <PanelBtn $mt={2} $h={21}>单构件输入</PanelBtn>
          <PanelBtn $mt={1}>报表预览</PanelBtn>
        </Left>

        <Right>
          <OptionStrip>
            <Grip />
            <Combo $w={47} $h={24} $ml={2}><Lbl $c="#111">不偏移</Lbl></Combo>
            <Caret $ml={3} />
            <Sep $ml={5} />
            <Lbl $ml={3}>X=</Lbl>
            <Field $w={58} $ml={3}>0<SpinArrows /></Field>
            <Lbl $ml={2}>mm</Lbl><Lbl $ml={7}>Y=</Lbl>
            <Field $w={57} $ml={3}>0<SpinArrows /></Field>
            <Lbl $ml={3}>mm</Lbl>
            <Sep $ml={4} />
            <Check $ml={4} />
            <Lbl $ml={9} $c="#222">旋转</Lbl>
            <Field $w={67} $ml={5}>0.000<SpinArrows /></Field>
            <Lbl $ml={5}>°</Lbl>
          </OptionStrip>

          <ToolRow $mt={4}>
            <Strip $w={790} $ml={1} $pl={4} $gap={7}>
              <Grip />
              <T i="del" ml={-2}>删除</T>
              <Sep />
              <T i="copy" ml={-1}>复制</T>
              <T i="mirror" ml={1}>镜像</T>
              <Sep />
              <T i="move" ml={-1}>移动</T>
              <T i="rotate" ml={1}>旋转</T>
              <Sep />
              <T i="ext" ml={-1} off>延伸</T>
              <T i="trim" ml={1} off>修剪</T>
              <Sep />
              <T i="brk" ml={-1} off>打断</T>
              <T i="merge" off>合并</T>
              <T i="split" ml={1} off>分割</T>
              <Sep />
              <T i="align" ml={-1} caret cm={2}>对齐</T>
              <T i="offset" ml={-1} gap={2}>偏移</T>
              <T i="stretch" ml={2} gap={2} off>拉伸</T>
              <Sep />
              <T i="grip" off>设置夹点</T>
            </Strip>
          </ToolRow>

          <ToolRow $mt={2}>
            <Strip $w={642} $ml={1} $pl={3} $gap={0}>
              <Grip />
              <Combo $w={47} $ml={2} $pl={3}>基础层</Combo><ComboArrow><Caret $ml={0} /></ComboArrow>
              <Combo $w={59} $ml={1} $pl={2}>基础</Combo><ComboArrow><Caret $ml={0} /></ComboArrow>
              <Combo $w={59} $ml={1}>桩承台</Combo><ComboArrow><Caret $ml={0} /></ComboArrow>
              <Combo $w={59} $ml={1}>CT-7</Combo><ComboArrow><Caret $ml={0} /></ComboArrow>
              <Combo $w={59} $ml={1}>整体</Combo><ComboArrow><Caret $ml={0} /></ComboArrow>
              <Sep $ml={0} />
              <T i="attr" ml={5}>属性</T>
              <T i="editbar" ml={7}>编辑钢筋</T>
              <T i="list" ml={9}>构件列表</T>
              <T i="pick" ml={8}>拾取构件</T>
            </Strip>
            <Strip $w={24} $ml={4} $pl={2} $gap={0}><Grip /></Strip>
            <Strip $w={423} $ml={2} $pl={12} $gap={0}>
              <T i="twop">两点</T>
              <T i="para" ml={7} gap={4}>平行</T>
              <T i="angle" ml={8} caret cm={3}>点角</T>
              <T i="three" ml={6} gap={5} caret cm={1}>三点辅轴</T>
              <T i="delaxis" ml={7} gap={4}>删除辅轴</T>
              <T i="dim" ml={9} gap={2} caret cm={5}>尺寸标注</T>
            </Strip>
          </ToolRow>

          <ToolRow $mt={3}>
            <Strip $h={27} $w={1039} $ml={1} $pl={3} $gap={0}>
              <Grip />
              <T i="del" ml={7}>选择</T>
              <Sep $ml={18} />
              <T i="point" ml={8}>点</T>
              <T i="rot" ml={6}>旋转点</T>
              <Sep $ml={6} />
              <T i="ext" ml={7} off>直线</T>
              <T i="three" ml={8} caret cm={3}>三点画弧</T>
              <BoxCombo><Caret $ml={0} $c="#777" /></BoxCombo>
              <T i="rectc" ml={5} off>矩形</T>
              <Sep $ml={6} />
              <T i="smart" ml={7} caret cm={2}>智能布置</T>
              <Sep $ml={6} />
              <T i="bardir" ml={4} off>调整钢筋方向</T>
              <T i="strong" ml={8} off>编辑承台加强筋</T>
              <T i="note" ml={8} caret cm={5}>查改标注</T>
              <T i="apply" ml={6}>应用到同名承台</T>
              <T i="hand" on ml={4}>调整承台放坡</T>
            </Strip>
          </ToolRow>

          <MainCanvas />

          <SnapBar>
            <Strip $h={24} $w={209} $ml={1} $pl={3} $gap={0}>
              <Grip />
              <T i="ortho" ml={5} gap={4}>正交</T>
              <T i="snap" on ml={4}>对象捕捉</T>
              <T i="dynin" on>动态输入</T>
            </Strip>
            <Strip $h={24} $w={263} $ml={3} $pl={3} $gap={0}>
              <Grip />
              <T i="cross" ml={4} gap={4}>交点</T>
              <T i="perp" on ml={5}>垂点</T>
              <T i="mid" on ml={1}>中点</T>
              <T i="vert" ml={1} gap={3}>顶点</T>
              <T i="coord" ml={8} gap={4}>坐标</T>
            </Strip>
          </SnapBar>
        </Right>
      </Body>

      <Status>
        <Cell $w={149}><Lat>X=36216 Y=4073</Lat></Cell>
        <Cell $w={79}>层高<Lat>:3.55m</Lat></Cell>
        <Cell $w={99}>底标高<Lat>:-3.58m</Lat></Cell>
        <Cell $w={48}><Lat>1(2)</Lat></Cell>
        <Cell>按鼠标左键选择需要调整放坡的边，按右键确定或<Lat>ESC</Lat>取消</Cell>
        <Cell $w={69}><Lat>740.1 FPS</Lat></Cell>
      </Status>

      <Taskbar>
        <Start>
          <TaskSvg $s={16} viewBox="0 0 16 16"><path d="M0 2.3L6.5 1.4V7.5H0zM7.3 1.3L16 0V7.5H7.3zM0 8.3H6.5V14.5L0 13.6zM7.3 8.3H16V16L7.3 14.7z" fill="#fff" /></TaskSvg>
        </Start>
        <Search>
          <TaskSvg $s={20} viewBox="0 0 20 20"><circle cx="10" cy="10" r="8" fill="none" stroke="#e8e8e8" strokeWidth="2" /></TaskSvg>
          <SearchText>在这里输入你要搜索的内容</SearchText>
          <TaskSvg $s={20} $mr={10} viewBox="0 0 20 20"><path d="M7.5 2h5v10h-5zM5 10c0 6 10 6 10 0M10 15v4M6.5 19h7" fill="none" stroke="#a0a0a0" /></TaskSvg>
        </Search>
        <Slot $ml={2}>
          <TaskSvg viewBox="0 0 24 24"><path d="M11.5 11.5C4 12 2 8 2.5 5S7 .5 9.5 2c3 2 3 6 2 9.5zM12.5 11.5C12 4 16 2 19 2.5S23.500 7 22 9.5c-2 3-6 3-9.5 2zM12.5 12.5C20 12 22 16 21.5 19S17 23.500 14.5 22c-3-2-3-6-2-9.5zM11.5 12.5C12 20 8 22 5 21.5S.5 17 2 14.5c2-3 6-3 9.5-2z" fill="#e4e4e4" /></TaskSvg>
        </Slot>
        <Slot $ml={7}>
          <TaskSvg viewBox="0 0 24 24">
            <path d="M12 6a8 8 0 1 0 8 8c0-4-3-6-6-6s-5 2-5 5 2 4 4 4" fill="none" stroke="#d8d8d8" strokeWidth="1.8" />
            <path d="M18 1c-2 0-3 2-3 4s-1 3-2 4h10c-1-1-2-2-2-4s-1-4-3-4z" fill="#f0a818" />
          </TaskSvg>
        </Slot>
        <Slot>
          <TaskSvg viewBox="0 0 24 24"><path d="M5 12.5h14c0-5-3-7.5-7-7.5-4.5 0-8 3-8 8 0 5 3.5 8 8 8 3 0 5-1 7-2.5" fill="none" stroke="#0f7fd8" strokeWidth="4" /></TaskSvg>
        </Slot>
        <Slot>
          <TaskSvg viewBox="0 0 24 24">
            <path d="M8 7c0-7 8-7 8 0" fill="none" stroke="#fff" />
            <path d="M3 7h18v15H3z" fill="#fff" />
            <path d="M7 9.5h4.5V14H7zM12.5 9.5H17V14h-4.5zM7 15h4.5v4.5H7zM12.5 15H17v4.5h-4.5z" fill="#111" />
          </TaskSvg>
        </Slot>
        <Slot $run>
          <TaskSvg viewBox="0 0 24 24">
            <path d="M2 3h8l2 3h10v15H2z" fill="#f6d36a" />
            <path d="M2 8h20v13H2z" fill="#fce08a" />
            <path d="M7 13h10v7H7z" fill="#3f9fe0" />
            <path d="M10 17h4v3h-4z" fill="#cfe8fa" />
          </TaskSvg>
        </Slot>
        <Slot $ml={4}>
          <TaskSvg viewBox="0 0 24 24">
            <path d="M21 5C13 1 3 5 3 14c0 6 6 9 11 7l5-4-5 1c-4 1-6-2-6-5 0-5 6-8 13-8z" fill="#2a8ee0" />
            <path d="M8 13c2 5 7 5 11 3l-2 5c-4 2-8 1-10-2z" fill="#e23a3a" />
          </TaskSvg>
        </Slot>
        <Slot $run>
          <TaskSvg viewBox="0 0 24 24">
            <circle cx="12" cy="13" r="10" fill="#7ed03a" stroke="#e8f4d8" />
            <path d="M6 13h12c0-7-12-7-12 0 0 6 8 7 11 3" fill="none" stroke="#fff" strokeWidth="2.2" />
            <path d="M3 6l4-4M21 6l-4-4" stroke="#5aa82a" />
          </TaskSvg>
        </Slot>
        <Slot $run $on>
          <TaskSvg $s={26} viewBox="0 0 26 26">
            <rect x="1" y="1" width="24" height="24" rx="4" fill="#1a9af0" />
            <path d="M13 5v11M6 11c0 6 2 9 7 9s7-3 7-9M9 10h8" stroke="#fff" strokeWidth="2.2" fill="none" />
          </TaskSvg>
        </Slot>
        <Slot $run>
          <TaskSvg viewBox="0 0 24 24">
            <rect x="1" y="1" width="22" height="22" rx="2" fill="#f4a418" />
            <rect x="4" y="5" width="14" height="15" fill="#fdf2d4" />
            <path d="M6 9h9M6 12h9M6 15h7" stroke="#b07820" />
            <path d="M19 3L12 16l-1 3 3-2L21 5z" fill="#c8541c" />
          </TaskSvg>
        </Slot>
        <Tray>
          <TrayStack $w={64} $mr={6}><div>58%</div><div>CPU使用</div></TrayStack>
          <TraySlot $w={24}>
            <TaskSvg $s={14} viewBox="0 0 14 14"><path d="M1.5 10L7 4l5.5 6" fill="none" stroke="#fff" strokeWidth="1.2" /></TaskSvg>
          </TraySlot>
          <TraySlot $w={25}>
            <TaskSvg $s={18} viewBox="0 0 18 18"><rect x="3.5" y="5.5" width="12" height="8" fill="none" stroke="#fff" /><rect x="6" y="7" width="8" height="5" fill="#fff" /><path d="M0 9h3" stroke="#fff" strokeWidth="1.5" /></TaskSvg>
          </TraySlot>
          <TraySlot $w={24}>
            <TaskSvg $s={16} viewBox="0 0 16 16"><path d="M2 14A12 12 0 0 1 14 2M5 14A9 9 0 0 1 14 5M8 14a6 6 0 0 1 6-6M11 14a3 3 0 0 1 3-3" fill="none" stroke="#ccc" strokeDasharray="1.5 .8" /></TaskSvg>
          </TraySlot>
          <TraySlot $w={20}>中</TraySlot>
          <TraySlot $w={22} $ml={8}>
            <TaskSvg $s={18} viewBox="0 0 18 18">
              <rect x="2" y="2" width="14" height="14" rx="3" fill="#f0481c" transform="rotate(-8 9 9)" />
              <text x="9" y="14" textAnchor="middle" fontFamily="Liberation Sans" fontWeight="bold" fontSize="14" fill="#fff">S</text>
            </TaskSvg>
          </TraySlot>
          <TrayStack $w={66} $ml={11}><div>12:28</div><div>2017/6/14</div></TrayStack>
          <Notify>
            <TaskSvg $s={20} viewBox="0 0 20 20"><path d="M2 2h15v12H8l-3 3v-3H2z" fill="#fff" /><path d="M5 6h9M5 9h9" stroke="#222" /></TaskSvg>
            <NotifyBadge>6</NotifyBadge>
          </Notify>
        </Tray>
      </Taskbar>

      <Sogou>
        <SogouLogo viewBox="0 0 26 26">
          <rect x="2" y="2" width="22" height="22" rx="3" fill="#f0481c" transform="rotate(-6 13 13)" />
          <text x="13" y="21" textAnchor="middle" fontFamily="Liberation Sans" fontWeight="bold" fontSize="21" fill="#fff">S</text>
        </SogouLogo>
        <SogouZh>中</SogouZh>
        <TaskSvg $s={16} viewBox="0 0 16 16"><circle cx="4" cy="6" r="2" fill="#0c6fbe" /><path d="M11 6a2 2 0 1 1 1 2c0 2-1 3-2 4" fill="#0c6fbe" stroke="#0c6fbe" /></TaskSvg>
        <TaskSvg $s={18} viewBox="0 0 18 18"><rect x="6" y="1" width="6" height="11" rx="3" fill="#0c6fbe" /><path d="M3 8c0 7 12 7 12 0M9 13v4M6 17h6" fill="none" stroke="#0c6fbe" strokeWidth="1.5" /></TaskSvg>
        <TaskSvg $s={18} viewBox="0 0 18 18"><rect x="1" y="3" width="16" height="12" rx="2" fill="#0c6fbe" /><path d="M3.5 6.5h11M3.5 9h11M5 12h8" stroke="#fff" strokeDasharray="1.5 1" /></TaskSvg>
        <TaskSvg $s={18} viewBox="0 0 18 18"><circle cx="7" cy="5" r="3.5" fill="#a8b4c0" /><path d="M1 16c0-6 12-6 12 0z" fill="#a8b4c0" /><rect x="9" y="10" width="7" height="7" fill="#e8ecf0" stroke="#a8b4c0" /></TaskSvg>
        <TaskSvg $s={18} viewBox="0 0 18 18"><path d="M5 1L1 4l2 4 2-1v10h8V7l2 1 2-4-4-3-2 1.5h-2z" fill="#0c6fbe" /></TaskSvg>
        <TaskSvg $s={18} viewBox="0 0 18 18"><path d="M16 3l-3 3-2-1 1-3c-3-1-6 1-5 5L2 13c-1 2 2 4 3 2l5-5c4 1 6-3 6-7z" fill="#0c6fbe" /></TaskSvg>
      </Sogou>
      <Badge>73</Badge>

      <Dialog>
        <DlgTitle>
          调整承台放坡
          <DlgClose viewBox="0 0 12 12"><path d="M1 1l10 10M11 1L1 11" stroke="#333" /></DlgClose>
        </DlgTitle>
        <DlgOptions>
          <RadioItem><RadioDot /><span>放坡形式<Lat>1</Lat></span></RadioItem>
          <RadioItem><RadioDot $on /><span>放坡形式<Lat>2</Lat></span></RadioItem>
        </DlgOptions>
        <CadDrawing />
        <DlgFoot>
          <DlgBtn>确定</DlgBtn>
          <DlgBtn>取消</DlgBtn>
        </DlgFoot>
      </Dialog>
    </Shell>
  );
}
